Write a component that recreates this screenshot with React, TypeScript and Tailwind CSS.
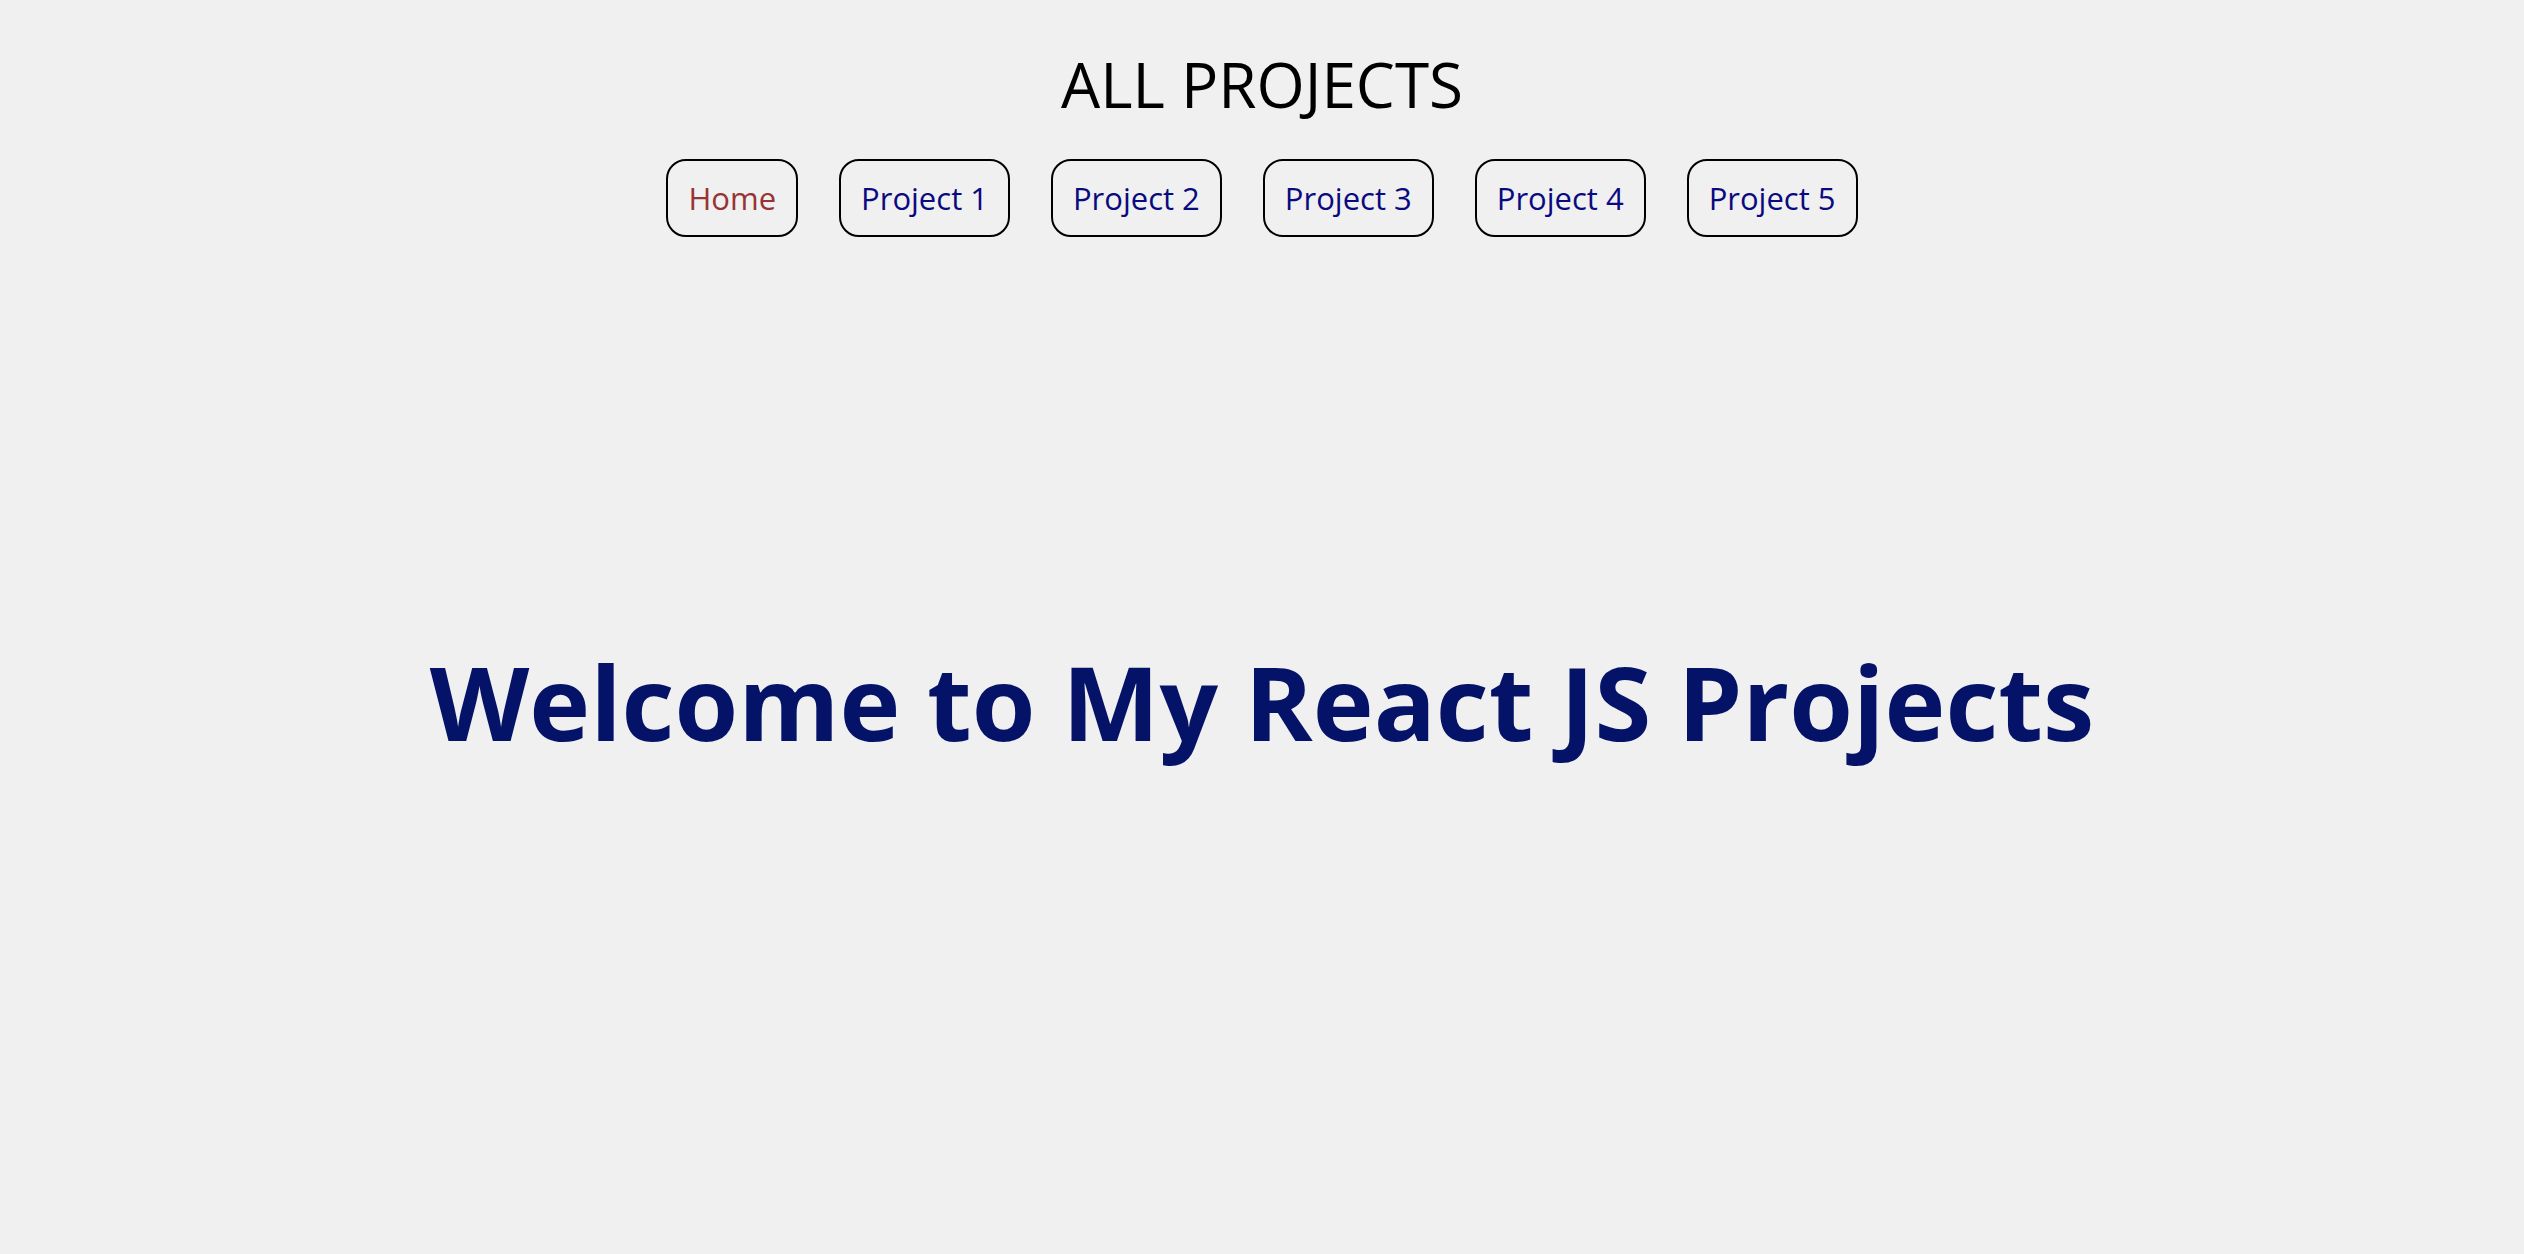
import React, { useState } from 'react';

const projects = ['Home', 'Project 1', 'Project 2', 'Project 3', 'Project 4', 'Project 5'];

const App: React.FC = () => {
  const [active, setActive] = useState('Home');

  return (
    <div className="min-h-screen w-full bg-[#f0f0f0] flex flex-col items-center font-['Open_Sans',sans-serif]">
      <h1 className="mt-[44px] text-[62px] leading-[80px] text-black font-normal">ALL PROJECTS</h1>
      <nav className="mt-[35px] flex gap-[41px]">
        {projects.map((p) => (
          <button
            key={p}
            onClick={() => setActive(p)}
            className={`h-[78px] px-[20px] rounded-[20px] border-2 border-black bg-transparent text-[31px] ${
              active === p ? 'text-[#993333]' : 'text-[#0a0a80]'
            }`}
          >
            {p}
          </button>
        ))}
      </nav>
      <main className="flex-1 flex items-start justify-center pt-[413px]">
        <h2 className="text-[103px] font-bold leading-none text-[#041268]">Welcome to My React JS Projects</h2>
      </main>
    </div>
  );
};

export default App;
